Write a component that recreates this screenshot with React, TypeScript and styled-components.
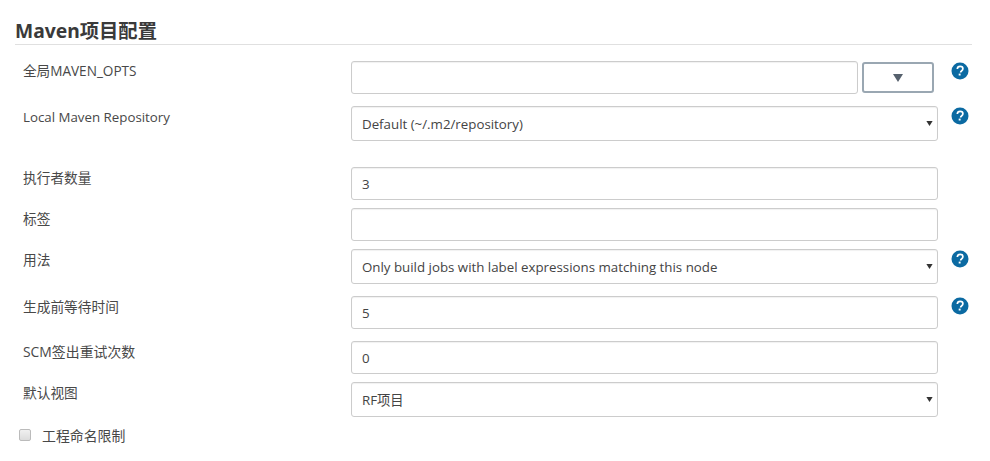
import React from "react";
import styled, { createGlobalStyle } from "styled-components";

const Global = createGlobalStyle`
  html, body { margin: 0; padding: 0; background: #fff; }
  body { font-family: "Open Sans", "Noto Sans CJK SC", sans-serif; color: #333; }
`;

const Page = styled.div`
  width: 990px;
  height: 461px;
  overflow: hidden;
  box-sizing: border-box;
  padding: 18px 0 0 15px;
`;

const Title = styled.h2`
  margin: 0 0 16px;
  width: 957px;
  height: 27px;
  box-sizing: border-box;
  border-bottom: 1px solid #e0e0e0;
  font-family: "Noto Sans", "Noto Sans CJK SC", sans-serif;
  font-size: 19.3px;
  line-height: 25px;
  font-weight: 700;
  color: #3a3a3a;
`;

const Row = styled.div<{ $gap: number }>`
  display: grid;
  grid-template-columns: 336px 587px 32px;
  align-items: start;
  margin-bottom: ${(p) => p.$gap}px;
`;

const Label = styled.div<{ $size?: number; $top?: number }>`
  padding-left: 8px;
  font-size: ${(p) => p.$size ?? 13.7}px;
  line-height: 20px;
  color: #484848;
  margin-top: ${(p) => p.$top ?? 1}px;
`;

const Field = styled.div`
  display: flex;
  gap: 4px;
`;

const TextInput = styled.div<{ $grow?: boolean }>`
  box-sizing: border-box;
  width: ${(p) => (p.$grow ? "507px" : "587px")};
  height: 33px;
  border: 1px solid #ccc;
  border-radius: 3px;
  padding: 0 10px;
  font-size: 13.3px;
  line-height: 33px;
  color: #444;
  box-shadow: inset 0 1px 1px rgba(0, 0, 0, 0.06);
`;

const SelectBox = styled.div`
  box-sizing: border-box;
  width: 587px;
  height: 35px;
  border: 1px solid #ccc;
  border-radius: 3px;
  padding: 0 4px 0 10px;
  display: flex;
  align-items: center;
  justify-content: space-between;
  font-size: 13.3px;
  color: #444;
  box-shadow: inset 0 1px 1px rgba(0, 0, 0, 0.06);
`;

const DropButton = styled.div`
  box-sizing: border-box;
  width: 72px;
  height: 31px;
  margin-top: 1px;
  border: 2px solid #9aa7b2;
  border-radius: 3px;
  display: flex;
  align-items: center;
  justify-content: center;
  background: #fff;
`;

const HelpCell = styled.div`
  padding: 1px 0 0 13px;
`;

const CheckRow = styled.div`
  display: flex;
  align-items: center;
  gap: 11px;
  padding-left: 4px;
  margin-top: 9px;
  font-size: 13.9px;
  line-height: 20px;
  color: #484848;
`;

const CheckBox = styled.span`
  box-sizing: border-box;
  width: 12px;
  height: 12px;
  border: 1px solid #bbb;
  border-radius: 2px;
  background: linear-gradient(#f0f0f0, #dcdcdc);
  margin-top: -2px;
`;

const Help = () => (
  <svg width="18" height="18" viewBox="0 0 18 18">
    <circle cx="9" cy="9" r="8.5" fill="#0b6aa2" />
    <path d="M6.3 7c.1-1.7 1.2-2.6 2.8-2.6 1.7 0 2.8 1 2.8 2.3 0 1.1-.6 1.7-1.4 2.3-.7.5-.9.8-.9 1.6" fill="none" stroke="#fff" strokeWidth="1.7" />
    <rect x="7.7" y="11.6" width="1.9" height="1.9" fill="#fff" />
  </svg>
);

const Caret = ({ w, color }: { w: number; color: string }) => (
  <svg width={w} height={w - 2} viewBox="0 0 10 8">
    <path d="M0 0h10L5 8z" fill={color} />
  </svg>
);

const Select = ({ value }: { value: string }) => (
  <SelectBox>
    <span>{value}</span>
    <Caret w={7} color="#333" />
  </SelectBox>
);

export default function App() {
  return (
    <Page>
      <Global />
      <Title>Maven项目配置</Title>
      <Row $gap={12}>
        <Label $size={13.6} $top={0}>全局MAVEN_OPTS</Label>
        <Field>
          <TextInput $grow />
          <DropButton><Caret w={10} color="#56616d" /></DropButton>
        </Field>
        <HelpCell><Help /></HelpCell>
      </Row>
      <Row $gap={26}>
        <Label $size={13.3}>Local Maven Repository</Label>
        <Select value="Default (~/.m2/repository)" />
        <HelpCell><Help /></HelpCell>
      </Row>
      <Row $gap={8}>
        <Label>执行者数量</Label>
        <TextInput>3</TextInput>
      </Row>
      <Row $gap={8}>
        <Label>标签</Label>
        <TextInput />
      </Row>
      <Row $gap={12}>
        <Label>用法</Label>
        <Select value="Only build jobs with label expressions matching this node" />
        <HelpCell><Help /></HelpCell>
      </Row>
      <Row $gap={12}>
        <Label>生成前等待时间</Label>
        <TextInput>5</TextInput>
        <HelpCell><Help /></HelpCell>
      </Row>
      <Row $gap={8}>
        <Label $size={13.9}>SCM签出重试次数</Label>
        <TextInput>0</TextInput>
      </Row>
      <Row $gap={0}>
        <Label>默认视图</Label>
        <Select value="RF项目" />
      </Row>
      <CheckRow>
        <CheckBox />
        <span>工程命名限制</span>
      </CheckRow>
    </Page>
  );
}
